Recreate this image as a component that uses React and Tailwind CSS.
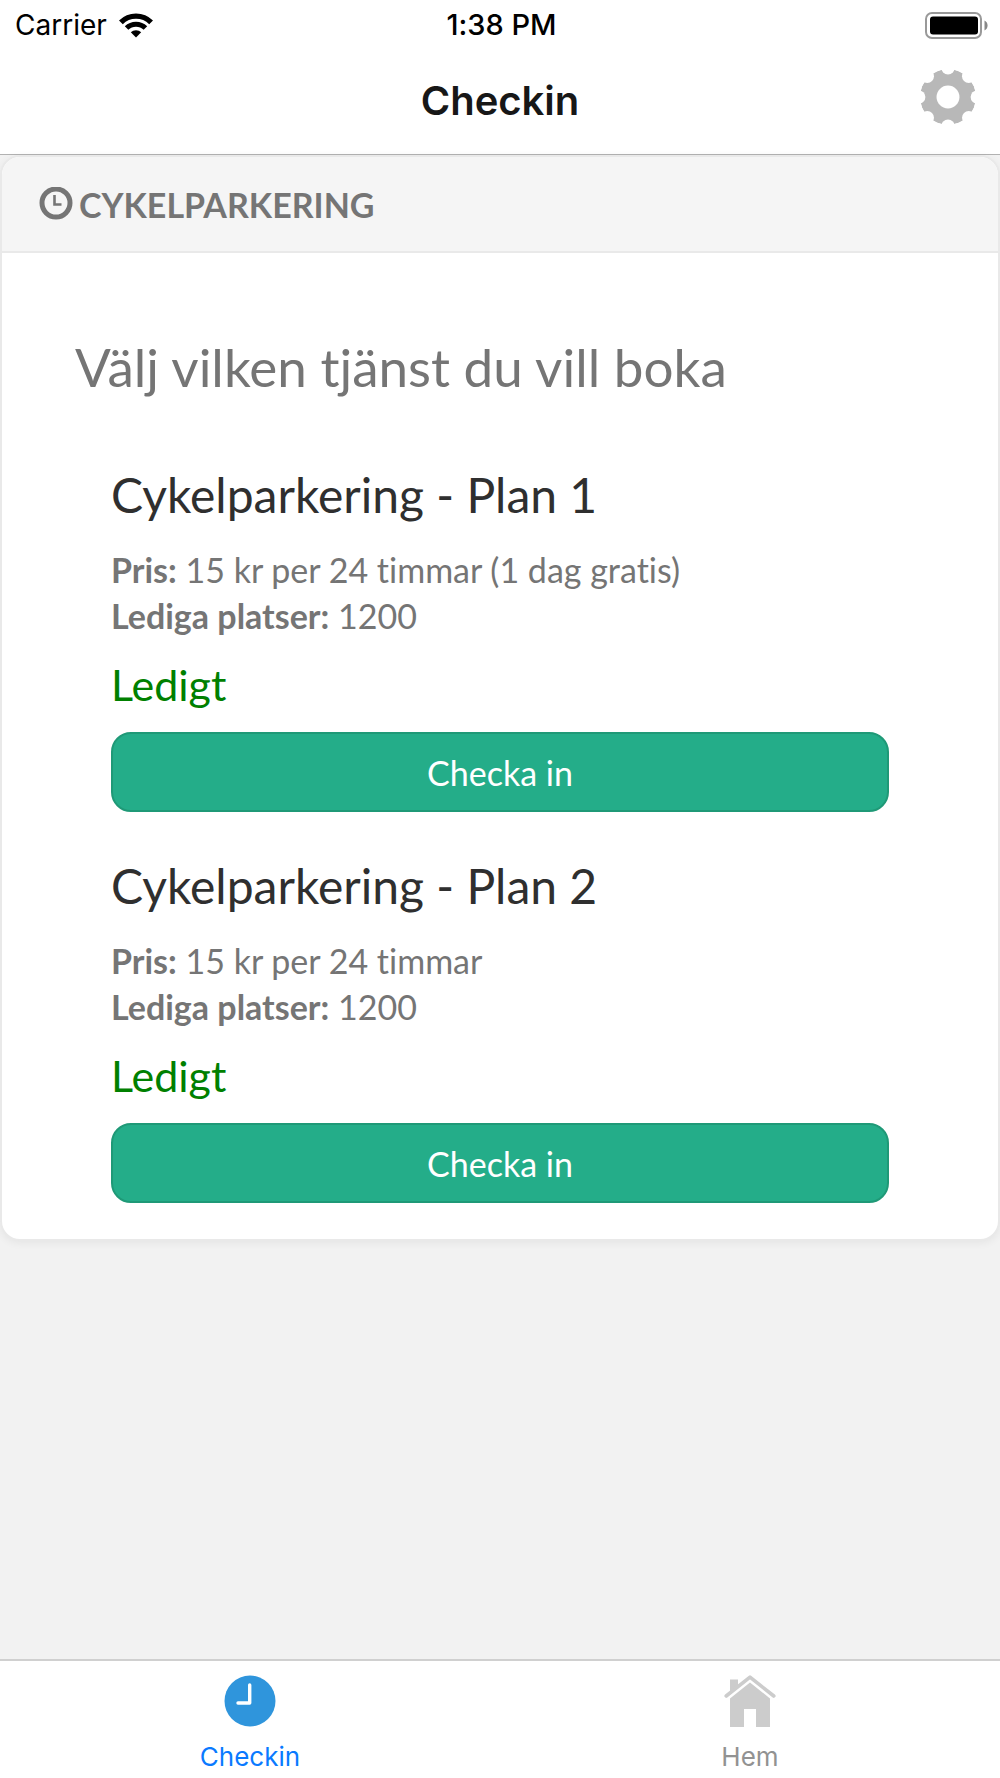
import React, { useState } from 'react';

const services = [
  { id: 1, name: 'Cykelparkering - Plan 1', price: '15 kr per 24 timmar (1 dag gratis)', spots: 1200 },
  { id: 2, name: 'Cykelparkering - Plan 2', price: '15 kr per 24 timmar', spots: 1200 },
];

function WifiIcon() {
  return (
    <svg viewBox="0 0 102 74" className="w-[34px] h-[25px]" aria-hidden="true">
      <g fill="none" stroke="#000">
        <path d="M5.7 27.7A64 64 0 0 1 96.3 27.7" strokeWidth="16" />
        <path d="M22.7 44.7A40 40 0 0 1 79.3 44.7" strokeWidth="15" />
      </g>
      <path d="M51 73L35.4 57.4A22 22 0 0 1 66.6 57.4Z" />
    </svg>
  );
}

function BatteryIcon() {
  return (
    <svg viewBox="0 0 63 27" className="w-[63px] h-[27px]" aria-hidden="true">
      <rect x="1" y="1" width="55" height="25" rx="6" fill="none" stroke="#999" strokeWidth="2" />
      <rect x="5" y="4.5" width="48" height="18" rx="3" />
      <path d="M59.5 8.5a5.6 5.6 0 0 1 0 10z" fill="#888" />
    </svg>
  );
}

function GearIcon() {
  return (
    <svg viewBox="-83 -83 166 166" className="w-14 h-14" aria-hidden="true">
      <mask id="gear-cut" maskUnits="userSpaceOnUse" x="-83" y="-83" width="166" height="166">
        <circle r="83" fill="#fff" />
        <circle r="34" fill="#000" />
        {[0, 45, 90, 135, 180, 225, 270, 315].map(a => (
          <circle key={a} cy="-87" r="20" fill="#000" transform={`rotate(${a})`} />
        ))}
      </mask>
      <circle r="83" fill="#b8b8b8" mask="url(#gear-cut)" />
    </svg>
  );
}

function ClockOutlineIcon() {
  return (
    <svg viewBox="0 0 34 34" className="w-[34px] h-[34px]" fill="none" stroke="#757575" aria-hidden="true">
      <circle cx="17" cy="16" r="14" strokeWidth="5" />
      <path d="M15.5 8V17.5H22.5" strokeWidth="2.6" />
    </svg>
  );
}

function ClockIcon() {
  return (
    <svg viewBox="0 0 52 52" className="w-[52px] h-[52px]" fill="none" aria-hidden="true">
      <circle cx="26" cy="26" r="25.5" fill="#2f95dc" />
      <path d="M25.7 10V28H14" stroke="#fff" strokeWidth="3.4" strokeLinecap="round" strokeLinejoin="round" />
    </svg>
  );
}

function HouseIcon() {
  return (
    <svg viewBox="0 0 52 52" className="w-[52px] h-[52px]" fill="#ccc" aria-hidden="true">
      <path d="M6 4.5H14V11L6 18Z" />
      <path d="M2.2 21L26 2.2L49.8 21" fill="none" stroke="#ccc" strokeWidth="3.6" strokeLinecap="round" strokeLinejoin="round" />
      <path d="M26 7.5L46 23.5V52H32V34H20V52H6V23.5Z" />
    </svg>
  );
}

function Service({ service }) {
  return (
    <article>
      <h3 className="text-5xl leading-[56px] text-[#2f2f2f]">{service.name}</h3>
      <div className="mt-6 text-[34px] leading-[46px]">
        <p><strong>Pris:</strong> {service.price}</p>
        <p><strong>Lediga platser:</strong> {service.spots}</p>
      </div>
      <p className="mt-5 text-[43px] leading-[52px] text-[#008000]">Ledigt</p>
      <button
        type="button"
        className="mt-[21px] w-full h-20 rounded-[20px] border-2 border-[#1f9977] bg-[#24ad89] text-[34px] text-white"
      >
        Checka in
      </button>
    </article>
  );
}

export default function App() {
  const [tab, setTab] = useState('checkin');

  return (
    <div className="min-h-screen flex flex-col bg-[#f2f2f2] font-[Lato,sans-serif] text-[#757575] [font-variant-ligatures:none]">
      {/* Status bar and title */}
      <header className="bg-white border-b border-[#b2b2b2] font-[Inter,sans-serif] text-black">
        <div className="grid grid-cols-3 items-center h-[50px] pl-[15px] pr-3 text-[28px]">
          <div className="flex items-center gap-3">
            <span>Carrier</span>
            <WifiIcon />
          </div>
          <time className="text-center text-[29px] font-medium">1:38 PM</time>
          <div className="flex justify-end">
            <BatteryIcon />
          </div>
        </div>
        <div className="grid grid-cols-[1fr_auto_1fr] items-center h-[104px] pb-[10px] pr-6">
          <h1 className="col-start-2 pl-6 pt-2 text-[40px] font-semibold text-[#171717]">Checkin</h1>
          <button type="button" aria-label="Inställningar" className="justify-self-end">
            <GearIcon />
          </button>
        </div>
      </header>

      <main className="flex-1">
        <section className="overflow-hidden rounded-[20px] border-2 border-[#e9e9e9] bg-white shadow-[0_2px_8px_rgba(0,0,0,0.06)]">
          <div className="flex items-center gap-1.5 h-24 px-[37px] border-b-2 border-[#e9e9e9] bg-[#f5f5f5]">
            <ClockOutlineIcon />
            <h2 className="text-[34px] font-bold uppercase">Cykelparkering</h2>
          </div>
          <div className="px-[73px] pt-[82px] pb-9">
            <p className="text-[53px] leading-[64px]">Välj vilken tjänst du vill boka</p>
            <div className="mt-[68px] px-9 flex flex-col gap-[46px]">
              {services.map(service => (
                <Service key={service.id} service={service} />
              ))}
            </div>
          </div>
        </section>
      </main>

      {/* Tab bar */}
      <nav className="grid grid-cols-2 h-[119px] border-t-2 border-[#d0d0d0] bg-white font-[Inter,sans-serif] text-[26px] leading-8">
        <button
          type="button"
          onClick={() => setTab('checkin')}
          className={`flex flex-col items-center gap-[14px] pt-[14px] ${tab === 'checkin' ? 'text-[#0a7aff]' : 'text-[#929292]'}`}
        >
          <ClockIcon />
          Checkin
        </button>
        <button
          type="button"
          onClick={() => setTab('hem')}
          className={`flex flex-col items-center gap-[14px] pt-[14px] ${tab === 'hem' ? 'text-[#0a7aff]' : 'text-[#929292]'}`}
        >
          <HouseIcon />
          Hem
        </button>
      </nav>
    </div>
  );
}
